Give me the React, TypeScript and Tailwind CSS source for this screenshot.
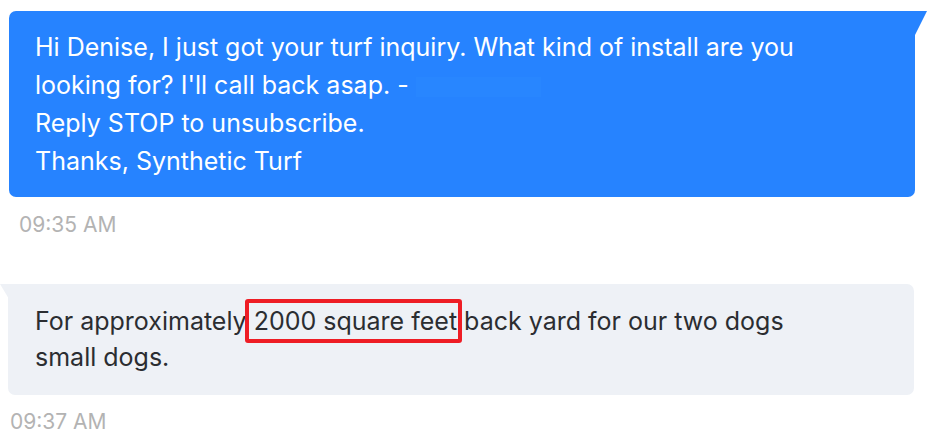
import React from "react";

const font = { fontFamily: "Inter, 'Noto Sans', sans-serif" };

function Stamp({ time, className }: { time: string; className: string }) {
  return <div className={`text-[21px] leading-none text-[#b3b3b3] ${className}`}>{time}</div>;
}

export default function App() {
  return (
    <div className="w-[930px] h-[446px] bg-white overflow-hidden" style={font}>
      {/* outgoing */}
      <div className="pt-[11px] pl-[9px] pr-[15px]">
        <div className="relative">
          <div className="bg-[#2683ff] rounded-l-[7px] rounded-br-[7px] px-[26px] py-[17px] text-white text-[25px] leading-[38px]">
            <div>Hi Denise, I just got your turf inquiry. What kind of install are you</div>
            <div>
              looking for? I'll call back asap. -{" "}
              <span className="inline-block w-[125px] h-[20px] align-middle bg-[#2886ff]" />
            </div>
            <div>Reply STOP to unsubscribe.</div>
            <div>Thanks, Synthetic Turf</div>
          </div>
          <svg className="absolute top-0 -right-[13px]" width="14" height="27" viewBox="0 0 14 27">
            <path d="M0 0 H13 L0 26 Z" fill="#2683ff" />
          </svg>
        </div>
        <Stamp time="09:35 AM" className="mt-[17px] ml-[10px]" />
      </div>

      {/* incoming */}
      <div className="pt-[49px] pl-[8px] pr-[16px]">
        <div className="relative">
          <div className="bg-[#eef1f6] rounded-r-[7px] rounded-bl-[7px] px-[27px] pt-[19px] pb-[20px] text-[#2b2d31] text-[25px] leading-[36px]">
            <div>
              For approximately{" "}
              <span className="relative">
                2000 square feet
                <span className="absolute -left-[9px] -right-[5px] -top-[7px] -bottom-[7px] border-4 border-[#ee1d25] rounded-[3px]" />
              </span>{" "}
              back yard for our two dogs
            </div>
            <div>small dogs.</div>
          </div>
          <svg className="absolute top-0 -left-[8px]" width="9" height="16" viewBox="0 0 9 16">
            <path d="M9 0 H0 L9 15 Z" fill="#eef1f6" />
          </svg>
        </div>
        <Stamp time="09:37 AM" className="mt-[16px] ml-[2px]" />
      </div>
    </div>
  );
}
